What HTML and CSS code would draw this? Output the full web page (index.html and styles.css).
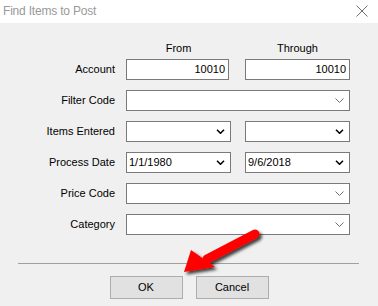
FILE: index.html
```html
<!DOCTYPE html>
<html>
<head>
<meta charset="utf-8">
<link rel="stylesheet" href="styles.css">
</head>
<body>
<div class="window">
  <div class="titlebar">
    <span class="title">Find Items to Post</span>
    <svg class="close" width="12" height="12" viewBox="0 0 12 12"><path d="M0.5 0.5 L11.5 11.5 M11.5 0.5 L0.5 11.5" stroke="#6d6d6d" stroke-width="1" fill="none"/></svg>
  </div>
  <div class="content">
    <div class="form">
      <div></div>
      <div class="head">From</div>
      <div class="head">Through</div>

      <div class="label">Account</div>
      <div class="box text narrow">10010</div>
      <div class="box text">10010</div>

      <div class="label">Filter Code</div>
      <div class="box combo wide disabled"><span></span><svg class="chev" width="9" height="5" viewBox="0 0 9 5"><path d="M0.5 0.5 L4.5 4.5 L8.5 0.5" stroke="#707070" stroke-width="1" fill="none"/></svg></div>

      <div class="label">Items Entered</div>
      <div class="box combo"><span></span><svg class="chev" width="9" height="5" viewBox="0 0 9 5"><path d="M1 0.8 L4.5 4.2 L8 0.8" stroke="#000" stroke-width="1.6" fill="none"/></svg></div>
      <div class="box combo"><span></span><svg class="chev" width="9" height="5" viewBox="0 0 9 5"><path d="M1 0.8 L4.5 4.2 L8 0.8" stroke="#000" stroke-width="1.6" fill="none"/></svg></div>

      <div class="label">Process Date</div>
      <div class="box combo"><span>1/1/1980</span><svg class="chev" width="9" height="5" viewBox="0 0 9 5"><path d="M1 0.8 L4.5 4.2 L8 0.8" stroke="#000" stroke-width="1.6" fill="none"/></svg></div>
      <div class="box combo"><span>9/6/2018</span><svg class="chev" width="9" height="5" viewBox="0 0 9 5"><path d="M1 0.8 L4.5 4.2 L8 0.8" stroke="#000" stroke-width="1.6" fill="none"/></svg></div>

      <div class="label">Price Code</div>
      <div class="box combo wide disabled"><span></span><svg class="chev" width="9" height="5" viewBox="0 0 9 5"><path d="M0.5 0.5 L4.5 4.5 L8.5 0.5" stroke="#707070" stroke-width="1" fill="none"/></svg></div>

      <div class="label">Category</div>
      <div class="box combo wide disabled"><span></span><svg class="chev" width="9" height="5" viewBox="0 0 9 5"><path d="M0.5 0.5 L4.5 4.5 L8.5 0.5" stroke="#707070" stroke-width="1" fill="none"/></svg></div>
    </div>
    <div class="sep"></div>
    <div class="buttons">
      <div class="btn">OK</div>
      <div class="btn">Cancel</div>
    </div>
  </div>
  <svg class="arrow" width="378" height="306" viewBox="0 0 378 306">
    <defs>
      <filter id="sh" x="-30%" y="-30%" width="160%" height="160%">
        <feDropShadow dx="2.5" dy="2.5" stdDeviation="1.8" flood-color="#000" flood-opacity="0.75"/>
      </filter>
    </defs>
    <g filter="url(#sh)">
      <line x1="255" y1="234" x2="207" y2="259" stroke="#ff0000" stroke-width="9" stroke-linecap="round"/>
      <polygon points="184,272 191,250 215,267" fill="#ff0000"/>
    </g>
  </svg>
</div>
</body>
</html>
```

FILE: styles.css
```css
html, body {
  margin: 0;
  padding: 0;
}
body {
  font-family: "Liberation Sans", Arial, sans-serif;
  font-size: 11px;
  color: #000;
  background: #f0f0f0;
}
.window {
  position: relative;
  width: 378px;
  height: 306px;
  background: #f0f0f0;
  overflow: hidden;
}
.titlebar {
  height: 23px;
  background: #fff;
  display: flex;
  align-items: center;
  justify-content: space-between;
  padding: 0 10px 0 3px;
}
.title {
  font-size: 12px;
  color: #999;
  letter-spacing: -0.2px;
  margin-top: -1px;
}
.close {
  display: block;
  margin-top: -1px;
}
.content {
  display: flex;
  flex-direction: column;
}
.form {
  display: grid;
  grid-template-columns: 115px 108px 105px;
  grid-template-rows: 7px repeat(6, 21px);
  column-gap: 11px;
  row-gap: 10px;
  padding-top: 19px;
}
.form .head {
  text-align: center;
  line-height: 13px;
  height: 7px;
  overflow: visible;
  width: 105px;
}
.label {
  text-align: right;
  line-height: 21px;
}
.box {
  box-sizing: border-box;
  height: 21px;
  width: 105px;
  background: #fff;
  border: 1px solid #7a7a7a;
  line-height: 19px;
}
.text {
  text-align: right;
  padding-right: 3px;
}
.narrow { width: 103px; }
.combo {
  display: flex;
  align-items: center;
  justify-content: space-between;
  padding: 0 5px 0 2px;
}
.wide {
  grid-column: 2 / 4;
  width: 224px;
}
.chev {
  display: block;
  flex: none;
}
.sep {
  height: 1px;
  background: #a0a0a0;
  margin: 28px 19px 0 18px;
}
.buttons {
  display: flex;
  justify-content: center;
  gap: 13px;
  padding-top: 12px;
}
.btn {
  box-sizing: border-box;
  width: 73px;
  height: 23px;
  background: #e1e1e1;
  border: 1px solid #adadad;
  text-align: center;
  line-height: 21px;
}
.arrow {
  position: absolute;
  left: 0;
  top: 0;
  pointer-events: none;
}
```
